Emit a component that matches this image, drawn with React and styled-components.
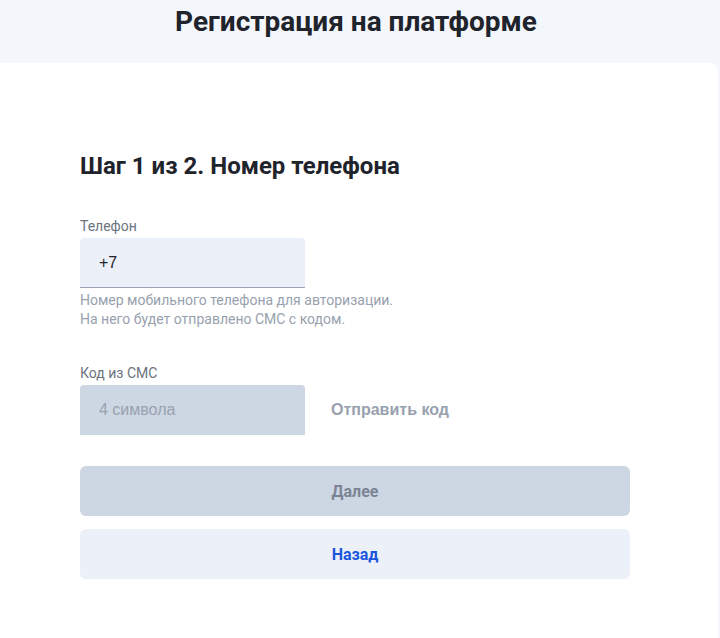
import React from 'react'
import styled, { createGlobalStyle } from 'styled-components'

const GlobalStyle = createGlobalStyle`
  html, body {
    margin: 0;
    padding: 0;
    background: #f3f6fb;
  }
  * {
    box-sizing: border-box;
  }
`

const display = `"Roboto", "Noto Sans", sans-serif`
const plain = `"Liberation Sans", Arial, sans-serif`

const Page = styled.div`
  min-height: 638px;
  display: flex;
  flex-direction: column;
`

const Header = styled.header`
  height: 63px;
  display: flex;
  align-items: flex-start;
  justify-content: center;
  padding: 4px 8px 0 0;
`

const Title = styled.h1`
  margin: 0;
  font-family: ${display};
  font-weight: 700;
  font-size: 28px;
  line-height: 36px;
  color: #1f232b;
`

const Card = styled.main`
  flex: 1;
  margin-right: 2px;
  background: #fff;
  border-top-right-radius: 8px;
  padding: 88px 88px 40px 80px;
`

const StepTitle = styled.h2`
  margin: 0 0 36px;
  font-family: ${display};
  font-weight: 700;
  font-size: 24px;
  line-height: 30px;
  color: #1f232b;
`

const Field = styled.div`
  display: flex;
  flex-direction: column;
  align-items: flex-start;
  margin-bottom: ${p => p.$gap || 0}px;
`

const Label = styled.label`
  font-family: ${display};
  font-size: 14px;
  line-height: 18px;
  color: #6b7480;
  margin-bottom: 3px;
`

const Row = styled.div`
  display: flex;
  align-items: center;
  gap: 26px;
`

const Input = styled.input`
  width: 225px;
  height: 50px;
  padding: 0 19px;
  border: none;
  border-radius: 4px 4px 0 0;
  outline: none;
  font-family: ${plain};
  font-size: 16px;
  color: #1f232b;
  background: ${p => (p.$disabled ? '#cdd6e3' : '#ecf0f8')};
  border-bottom: ${p => (p.$disabled ? 'none' : '1px solid #9aa5b8')};

  &::placeholder {
    color: #98a1ae;
  }
`

const Hint = styled.p`
  margin: 3px 0 0;
  font-family: ${display};
  font-size: 14px;
  line-height: 19px;
  color: #98a1ae;
`

const LinkButton = styled.button`
  padding: 0;
  border: none;
  background: none;
  font-family: ${plain};
  font-weight: 700;
  font-size: 16px;
  color: #98a1ae;
  cursor: pointer;
`

const Actions = styled.div`
  display: flex;
  flex-direction: column;
  gap: 13px;
  margin-top: 31px;
`

const Button = styled.button`
  height: 50px;
  border: none;
  border-radius: 6px;
  font-family: ${display};
  font-weight: 700;
  font-size: 16px;
  cursor: pointer;
  background: ${p => (p.$variant === 'primary' ? '#cdd6e3' : '#ecf0f8')};
  color: ${p => (p.$variant === 'primary' ? '#7b8494' : '#1a56db')};
`

export default function App() {
  return (
    <Page>
      <GlobalStyle />
      <Header>
        <Title>Регистрация на платформе</Title>
      </Header>
      <Card>
        <StepTitle>Шаг 1 из 2. Номер телефона</StepTitle>
        <Field $gap={35}>
          <Label>Телефон</Label>
          <Input defaultValue="+7" />
          <Hint>
            Номер мобильного телефона для авторизации.
            <br />
            На него будет отправлено СМС с кодом.
          </Hint>
        </Field>
        <Field>
          <Label>Код из СМС</Label>
          <Row>
            <Input $disabled disabled placeholder="4 символа" />
            <LinkButton>Отправить код</LinkButton>
          </Row>
        </Field>
        <Actions>
          <Button $variant="primary">Далее</Button>
          <Button>Назад</Button>
        </Actions>
      </Card>
    </Page>
  )
}
